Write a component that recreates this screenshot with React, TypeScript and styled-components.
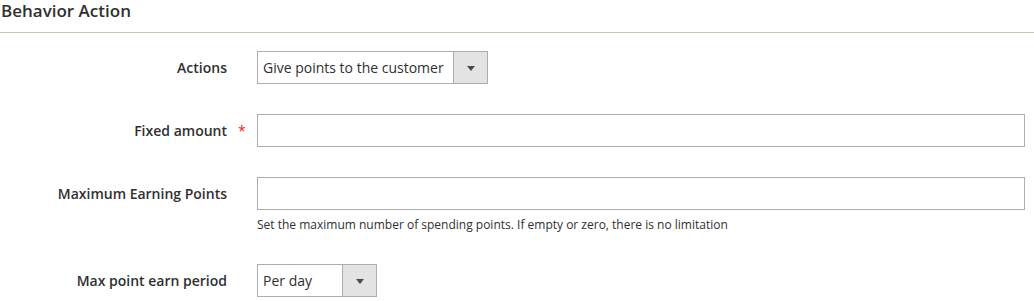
import React from "react";
import styled, { createGlobalStyle } from "styled-components";

const GlobalStyle = createGlobalStyle`
  html, body {
    margin: 0;
    padding: 0;
    background: #ffffff;
  }
  body {
    font-family: "Open Sans", "Liberation Sans", sans-serif;
    color: #303030;
  }
`;

const Page = styled.div`
  width: 1034px;
  height: 301px;
  overflow: hidden;
`;

const SectionTitle = styled.div`
  font-size: 17px;
  font-weight: 600;
  line-height: 22px;
  padding: 0 0 0 1px;
  height: 33px;
  box-sizing: border-box;
  border-bottom: 1px solid #cac3b4;
`;

const Fields = styled.div`
  display: flex;
  flex-direction: column;
  gap: 29px;
  padding-top: 18px;
`;

const Field = styled.div`
  display: grid;
  grid-template-columns: 227px 30px 1fr;
  align-items: start;
  padding-right: 9px;
`;

const Label = styled.label`
  font-size: 14px;
  font-weight: 600;
  line-height: 33px;
  text-align: right;
  white-space: nowrap;
`;

const Required = styled.span<{ $show: boolean }>`
  color: #e22626;
  font-size: 14px;
  line-height: 34px;
  padding-left: 11px;
  visibility: ${(p) => (p.$show ? "visible" : "hidden")};
`;

const Control = styled.div`
  display: flex;
  flex-direction: column;
`;

const TextInput = styled.div`
  height: 33px;
  box-sizing: border-box;
  border: 1px solid #adadad;
  background: #fff;
`;

const Select = styled.div<{ $width: number }>`
  width: ${(p) => p.$width}px;
  height: 33px;
  box-sizing: border-box;
  border: 1px solid #adadad;
  display: flex;
  align-items: stretch;
  background: #fff;
`;

const SelectValue = styled.div`
  flex: 1;
  font-size: 14px;
  line-height: 31px;
  padding-left: 5px;
  white-space: nowrap;
`;

const SelectArrow = styled.div`
  width: 33px;
  border-left: 1px solid #adadad;
  background: #e3e3e3;
  display: flex;
  align-items: center;
  justify-content: center;
  &::after {
    content: "";
    border-left: 4px solid transparent;
    border-right: 4px solid transparent;
    border-top: 5px solid #514943;
    margin-top: 1px;
  }
`;

const Note = styled.div`
  font-size: 12px;
  line-height: 20px;
  margin-top: 5px;
  color: #303030;
`;

type Row = {
  label: string;
  required?: boolean;
  kind: "input" | "select";
  value?: string;
  width?: number;
  note?: string;
};

const rows: Row[] = [
  { label: "Actions", kind: "select", value: "Give points to the customer", width: 231 },
  { label: "Fixed amount", kind: "input", required: true },
  {
    label: "Maximum Earning Points",
    kind: "input",
    note: "Set the maximum number of spending points. If empty or zero, there is no limitation",
  },
  { label: "Max point earn period", kind: "select", value: "Per day", width: 120 },
];

export default function App() {
  return (
    <Page>
      <GlobalStyle />
      <SectionTitle>Behavior Action</SectionTitle>
      <Fields>
        {rows.map((r) => (
          <Field key={r.label}>
            <Label>{r.label}</Label>
            <Required $show={!!r.required}>*</Required>
            <Control>
              {r.kind === "select" ? (
                <Select $width={r.width || 120}>
                  <SelectValue>{r.value}</SelectValue>
                  <SelectArrow />
                </Select>
              ) : (
                <TextInput />
              )}
              {r.note && <Note>{r.note}</Note>}
            </Control>
          </Field>
        ))}
      </Fields>
    </Page>
  );
}
